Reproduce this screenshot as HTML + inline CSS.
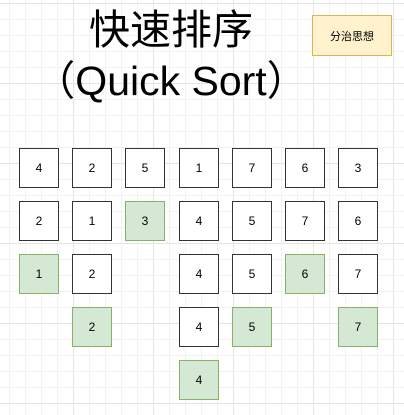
<!DOCTYPE html>
<html><head><meta charset="utf-8"><style>
body{margin:0;width:404px;height:415px;overflow:hidden;background:#fff;
background-image:linear-gradient(#e4e4e4 1px,transparent 1px),linear-gradient(90deg,#e4e4e4 1px,transparent 1px),linear-gradient(#f2f2f2 1px,transparent 1px),linear-gradient(90deg,#f2f2f2 1px,transparent 1px);
background-size:80px 80px,80px 80px,16px 16px,16px 16px;background-position:-7px 3px,-7px 3px,-7px 3px,-7px 3px;
font-family:"Liberation Sans","Noto Sans CJK SC",sans-serif;position:relative}
.t{position:absolute;left:0;width:342px;text-align:center;font-size:41px;color:#000;line-height:42px}
.b{position:absolute;width:38px;height:38px;border:1px solid #333;background:#fff;font-size:12px;display:flex;align-items:center;justify-content:center;color:#000}
.g{background:#d5e8d4;border-color:#82b366}
.n{position:absolute;left:312px;top:15px;width:78px;height:39px;background:#fff2cc;border:1px solid #d6b656;font-size:11px;display:flex;align-items:center;justify-content:center}
</style></head><body>
<div class="t" style="top:9px">快速排序</div>
<div class="t" style="top:60px">（Quick Sort）</div>
<div class="n">分治思想</div>
<div class="b" style="left:19px;top:148px">4</div>
<div class="b" style="left:72px;top:148px">2</div>
<div class="b" style="left:125px;top:148px">5</div>
<div class="b" style="left:179px;top:148px">1</div>
<div class="b" style="left:232px;top:148px">7</div>
<div class="b" style="left:285px;top:148px">6</div>
<div class="b" style="left:338px;top:148px">3</div>
<div class="b" style="left:19px;top:201px">2</div>
<div class="b" style="left:72px;top:201px">1</div>
<div class="b g" style="left:125px;top:201px">3</div>
<div class="b" style="left:179px;top:201px">4</div>
<div class="b" style="left:232px;top:201px">5</div>
<div class="b" style="left:285px;top:201px">7</div>
<div class="b" style="left:338px;top:201px">6</div>
<div class="b g" style="left:19px;top:254px">1</div>
<div class="b" style="left:72px;top:254px">2</div>
<div class="b" style="left:179px;top:254px">4</div>
<div class="b" style="left:232px;top:254px">5</div>
<div class="b g" style="left:285px;top:254px">6</div>
<div class="b" style="left:338px;top:254px">7</div>
<div class="b g" style="left:72px;top:307px">2</div>
<div class="b" style="left:179px;top:307px">4</div>
<div class="b g" style="left:232px;top:307px">5</div>
<div class="b g" style="left:338px;top:307px">7</div>
<div class="b g" style="left:179px;top:360px">4</div>
</body></html>
